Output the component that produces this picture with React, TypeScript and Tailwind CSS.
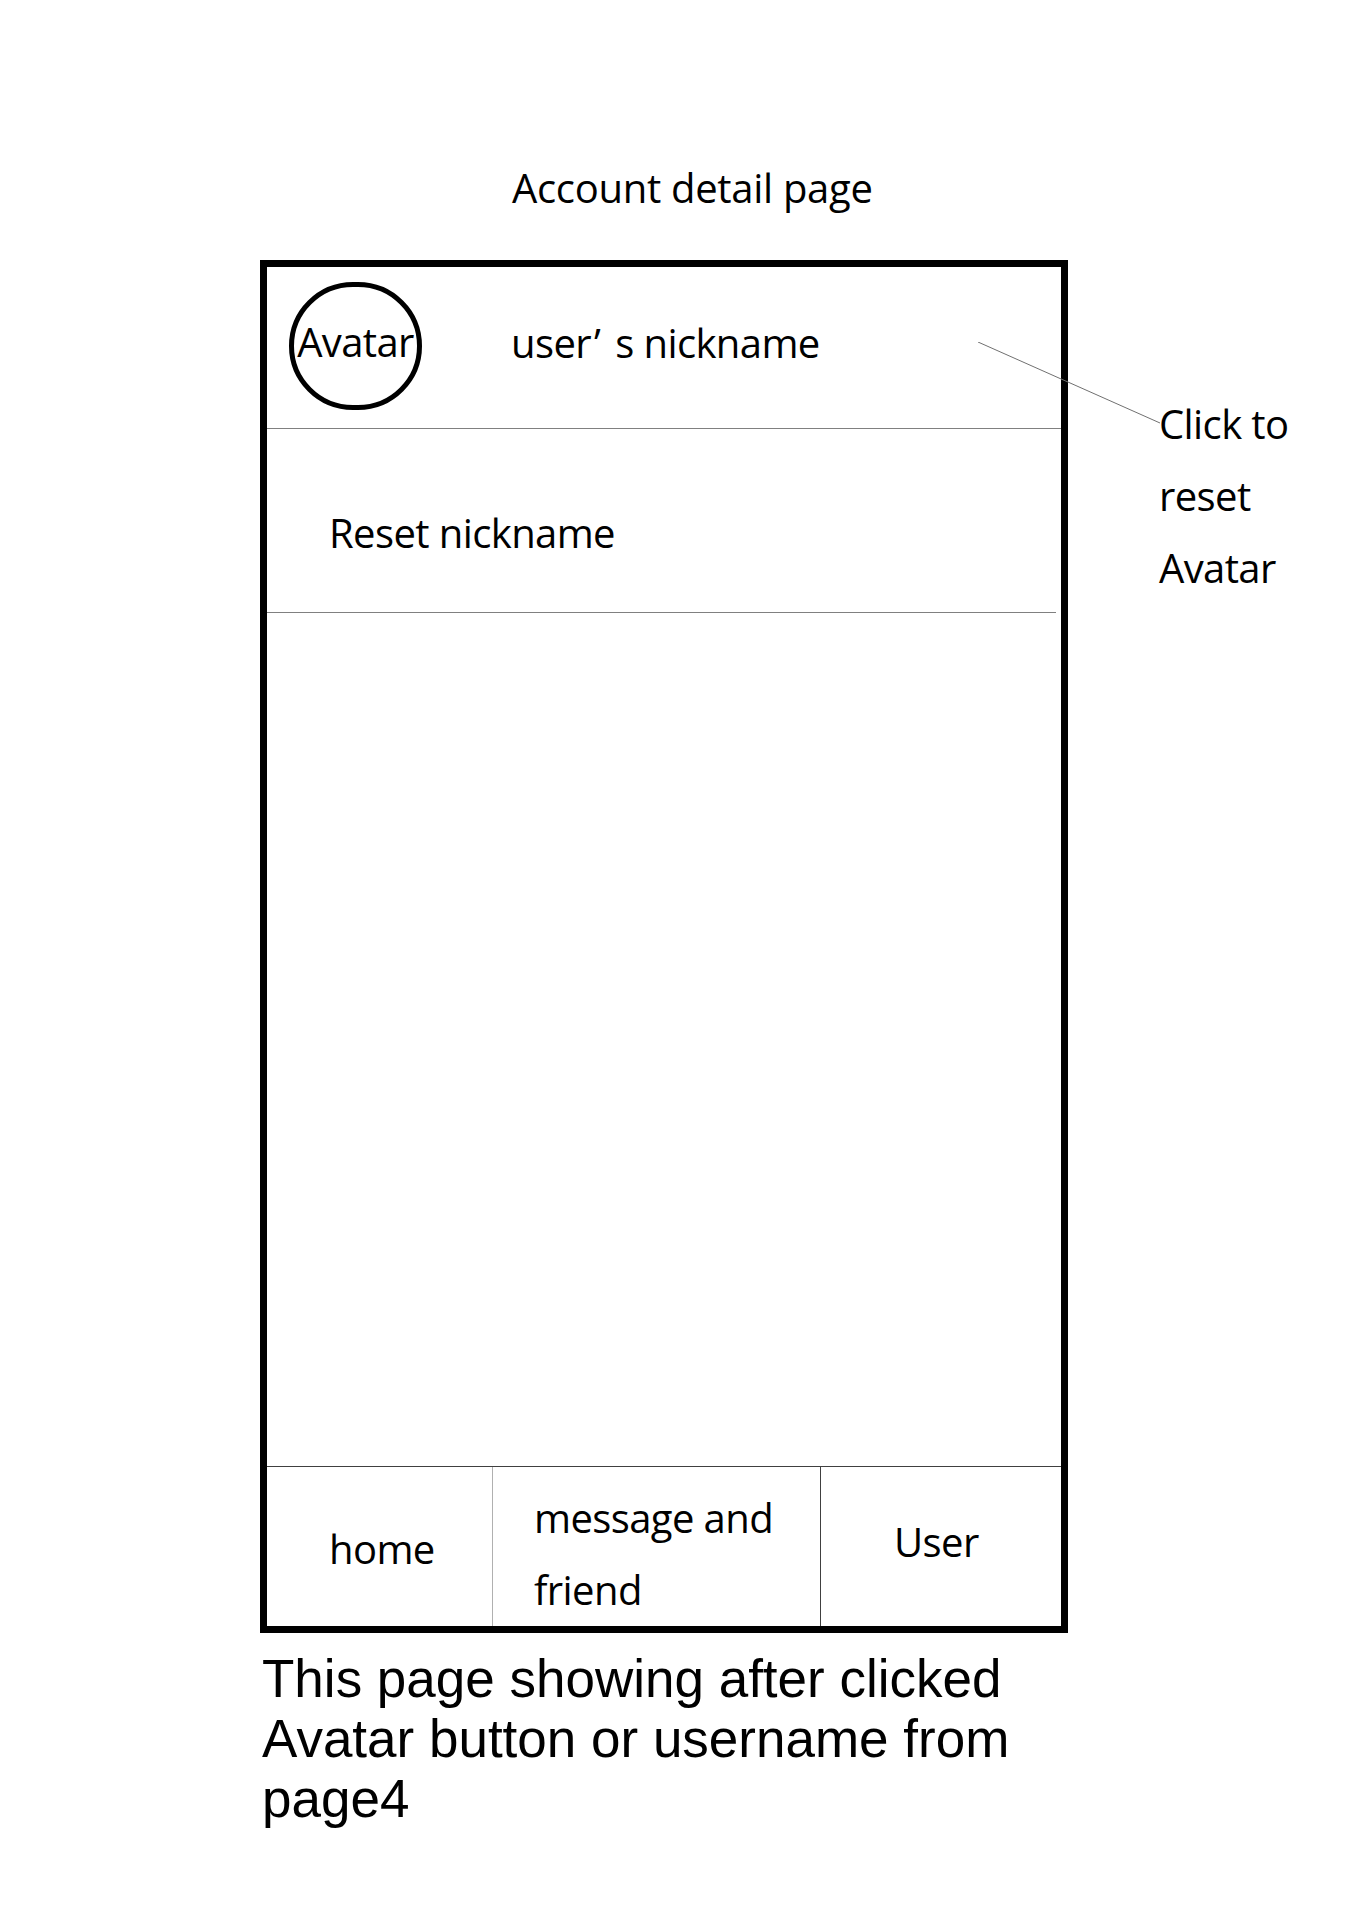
import React from 'react';

const sketch = { fontFamily: '"Open Sans", "Noto Sans", sans-serif' };
const caption = { fontFamily: '"Liberation Sans", Arial, sans-serif' };

export default function App() {
  return (
    <div className="relative min-h-[1920px] w-[1357px] bg-white text-black tracking-[-0.6px]" style={sketch}>
      {/* page title */}
      <div className="pl-[512px] pt-[152px] text-[40px] leading-[72px] tracking-[-0.3px]">Account detail page</div>

      <div className="ml-[260px] mt-[36px] flex items-start">
        {/* phone frame */}
        <div className="flex h-[1373px] w-[808px] flex-col border-[7px] border-black">
          {/* header: avatar + nickname */}
          <div className="flex h-[161px] items-start">
            <div className="ml-[22px] mt-[15px] flex h-[128px] w-[133px] shrink-0 items-center justify-center rounded-full border-[5px] border-black">
              <span className="pb-[9px] text-[40px] leading-[72px]">Avatar</span>
            </div>
            <div className="ml-[89px] pt-[40px] text-[40px] leading-[72px]">
              user<span className="ml-[3px] mr-[15px]">’</span>s nickname
            </div>
          </div>
          <div className="h-px bg-[#808080]" />

          <div className="h-[183px] pl-[62px] pt-[68px] text-[40px] leading-[72px]">Reset nickname</div>
          <div className="mr-[5px] h-px bg-[#808080]" />

          <div className="flex-1" />

          {/* bottom nav */}
          <div className="h-px bg-[#404040]" />
          <div className="flex h-[159px] text-[40px] leading-[72px]">
            <div className="w-[225px] pl-[62px] pt-[46px]">home</div>
            <div className="w-px bg-[#b0b0b0]" />
            <div className="w-[327px] pl-[41px] pt-[15px]">
              message and
              <br />
              friend
            </div>
            <div className="w-px bg-[#404040]" />
            <div className="flex-1 pl-[73px] pt-[39px]">User</div>
          </div>
        </div>

        {/* annotation */}
        <div className="ml-[91px] pt-[128px] text-[40px] leading-[72px]">
          Click to
          <br />
          reset
          <br />
          Avatar
        </div>
      </div>

      <p className="ml-[262px] mt-[16px] w-[808px] text-[53px] leading-[60px] tracking-normal" style={caption}>
        This page showing after clicked
        <br />
        Avatar button or username from
        <br />
        page4
      </p>

      {/* pointer line from header to note */}
      <svg className="absolute left-[978px] top-[342px]" width="183" height="82" viewBox="0 0 183 82">
        <line x1="0" y1="0" x2="182" y2="81" stroke="#707070" strokeWidth="1" />
      </svg>
    </div>
  );
}
